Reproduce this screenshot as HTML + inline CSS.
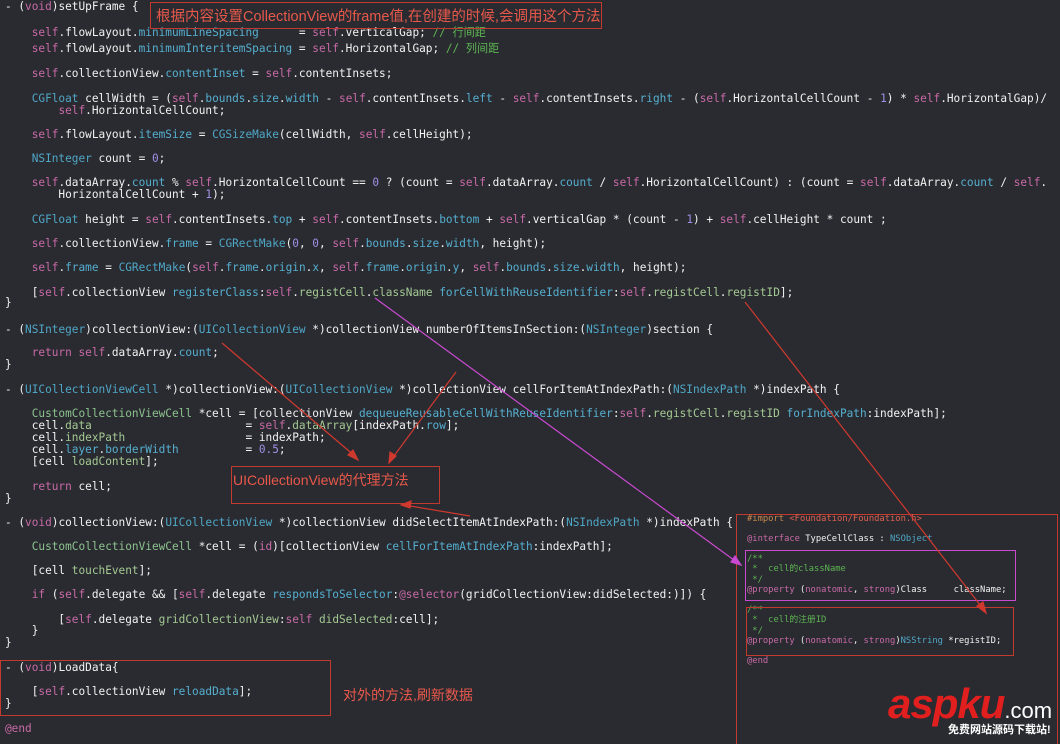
<!DOCTYPE html>
<html><head><meta charset="utf-8">
<style>
html,body{margin:0;padding:0;width:1060px;height:744px;overflow:hidden;}
body{background:#2a2b31;position:relative;font-family:"DejaVu Sans Mono","Noto Sans CJK SC",monospace;color:#f2f2f2;}
.l{position:absolute;left:5px;font-size:11.1px;line-height:13px;white-space:pre;}
.k{color:#c86aa6}.t{color:#4fa7c6}.p{color:#55afcf}.c{color:#8cc28e}.m{color:#5db552}.n{color:#a18fe6}.g{color:#a4c993}
.box{position:absolute;border:1px solid #c23a2e;}
.note{position:absolute;font-family:"Liberation Sans","Noto Sans CJK SC",sans-serif;color:#e8584a;font-size:14px;white-space:nowrap;}
.r{position:absolute;left:747px;font-size:8.8px;line-height:11px;white-space:pre;}
</style></head><body>
<div class="l" style="top:0px">- (<span class="k">void</span>)setUpFrame {</div>
<div class="l" style="top:26px">    <span class="k">self</span>.flowLayout.<span class="p">minimumLineSpacing</span>      = <span class="k">self</span>.verticalGap; <span class="m">// 行间距</span></div>
<div class="l" style="top:42px">    <span class="k">self</span>.flowLayout.<span class="p">minimumInteritemSpacing</span> = <span class="k">self</span>.HorizontalGap; <span class="m">// 列间距</span></div>
<div class="l" style="top:67px">    <span class="k">self</span>.collectionView.<span class="p">contentInset</span> = <span class="k">self</span>.contentInsets;</div>
<div class="l" style="top:92px">    <span class="t">CGFloat</span> cellWidth = (<span class="k">self</span>.<span class="p">bounds</span>.<span class="p">size</span>.<span class="p">width</span> - <span class="k">self</span>.contentInsets.<span class="p">left</span> - <span class="k">self</span>.contentInsets.<span class="p">right</span> - (<span class="k">self</span>.HorizontalCellCount - <span class="n">1</span>) * <span class="k">self</span>.HorizontalGap)/</div>
<div class="l" style="top:104px">        <span class="k">self</span>.HorizontalCellCount;</div>
<div class="l" style="top:128px">    <span class="k">self</span>.flowLayout.<span class="p">itemSize</span> = <span class="t">CGSizeMake</span>(cellWidth, <span class="k">self</span>.cellHeight);</div>
<div class="l" style="top:152px">    <span class="t">NSInteger</span> count = <span class="n">0</span>;</div>
<div class="l" style="top:176px">    <span class="k">self</span>.dataArray.<span class="p">count</span> % <span class="k">self</span>.HorizontalCellCount == <span class="n">0</span> ? (count = <span class="k">self</span>.dataArray.<span class="p">count</span> / <span class="k">self</span>.HorizontalCellCount) : (count = <span class="k">self</span>.dataArray.<span class="p">count</span> / <span class="k">self</span>.</div>
<div class="l" style="top:188px">        HorizontalCellCount + <span class="n">1</span>);</div>
<div class="l" style="top:213px">    <span class="t">CGFloat</span> height = <span class="k">self</span>.contentInsets.<span class="p">top</span> + <span class="k">self</span>.contentInsets.<span class="p">bottom</span> + <span class="k">self</span>.verticalGap * (count - <span class="n">1</span>) + <span class="k">self</span>.cellHeight * count ;</div>
<div class="l" style="top:237px">    <span class="k">self</span>.collectionView.<span class="p">frame</span> = <span class="t">CGRectMake</span>(<span class="n">0</span>, <span class="n">0</span>, <span class="k">self</span>.<span class="p">bounds</span>.<span class="p">size</span>.<span class="p">width</span>, height);</div>
<div class="l" style="top:261px">    <span class="k">self</span>.<span class="p">frame</span> = <span class="t">CGRectMake</span>(<span class="k">self</span>.<span class="p">frame</span>.<span class="p">origin</span>.<span class="p">x</span>, <span class="k">self</span>.<span class="p">frame</span>.<span class="p">origin</span>.<span class="p">y</span>, <span class="k">self</span>.<span class="p">bounds</span>.<span class="p">size</span>.<span class="p">width</span>, height);</div>
<div class="l" style="top:286px">    [<span class="k">self</span>.collectionView <span class="p">registerClass</span>:<span class="k">self</span>.<span class="g">registCell</span>.<span class="g">className</span> <span class="p">forCellWithReuseIdentifier</span>:<span class="k">self</span>.<span class="g">registCell</span>.<span class="g">registID</span>];</div>
<div class="l" style="top:296px">}</div>
<div class="l" style="top:323px">- (<span class="t">NSInteger</span>)collectionView:(<span class="t">UICollectionView</span> *)collectionView numberOfItemsInSection:(<span class="t">NSInteger</span>)section {</div>
<div class="l" style="top:346px">    <span class="k">return</span> <span class="k">self</span>.dataArray.<span class="p">count</span>;</div>
<div class="l" style="top:358px">}</div>
<div class="l" style="top:383px">- (<span class="t">UICollectionViewCell</span> *)collectionView:(<span class="t">UICollectionView</span> *)collectionView cellForItemAtIndexPath:(<span class="t">NSIndexPath</span> *)indexPath {</div>
<div class="l" style="top:407px">    <span class="c">CustomCollectionViewCell</span> *cell = [collectionView <span class="p">dequeueReusableCellWithReuseIdentifier</span>:<span class="k">self</span>.<span class="g">registCell</span>.<span class="g">registID</span> <span class="p">forIndexPath</span>:indexPath];</div>
<div class="l" style="top:419px">    cell.<span class="g">data</span>                       = <span class="k">self</span>.<span class="g">dataArray</span>[indexPath.<span class="p">row</span>];</div>
<div class="l" style="top:431px">    cell.<span class="g">indexPath</span>                  = indexPath;</div>
<div class="l" style="top:443px">    cell.<span class="p">layer</span>.<span class="p">borderWidth</span>          = <span class="n">0.5</span>;</div>
<div class="l" style="top:455px">    [cell <span class="g">loadContent</span>];</div>
<div class="l" style="top:480px">    <span class="k">return</span> cell;</div>
<div class="l" style="top:492px">}</div>
<div class="l" style="top:516px">- (<span class="k">void</span>)collectionView:(<span class="t">UICollectionView</span> *)collectionView didSelectItemAtIndexPath:(<span class="t">NSIndexPath</span> *)indexPath {</div>
<div class="l" style="top:540px">    <span class="c">CustomCollectionViewCell</span> *cell = (<span class="k">id</span>)[collectionView <span class="p">cellForItemAtIndexPath</span>:indexPath];</div>
<div class="l" style="top:564px">    [cell <span class="g">touchEvent</span>];</div>
<div class="l" style="top:588px">    <span class="k">if</span> (<span class="k">self</span>.delegate &amp;&amp; [<span class="k">self</span>.delegate <span class="p">respondsToSelector</span>:<span class="k">@selector</span>(gridCollectionView:didSelected:)]) {</div>
<div class="l" style="top:613px">        [<span class="k">self</span>.delegate <span class="g">gridCollectionView</span>:<span class="k">self</span> <span class="g">didSelected</span>:cell];</div>
<div class="l" style="top:624px">    }</div>
<div class="l" style="top:636px">}</div>
<div class="l" style="top:661px">- (<span class="k">void</span>)LoadData{</div>
<div class="l" style="top:685px">    [<span class="k">self</span>.collectionView <span class="p">reloadData</span>];</div>
<div class="l" style="top:697px">}</div>
<div class="l" style="top:722px"><span class="k">@end</span></div>

<div class="box" style="left:150px;top:2px;width:450px;height:25px"></div>
<div class="note" style="left:156px;top:5px;font-size:14.5px">根据内容设置CollectionView的frame值,在创建的时候,会调用这个方法</div>
<div class="box" style="left:231px;top:466px;width:207px;height:36px"></div>
<div class="note" style="left:233px;top:470px">UICollectionView的代理方法</div>
<div class="box" style="left:0px;top:660px;width:329px;height:54px"></div>
<div class="note" style="left:343px;top:685px">对外的方法,刷新数据</div>

<div class="box" style="left:736px;top:514px;width:320px;height:232px"></div>
<div class="r" style="top:514px"><span style="color:#c8884a">#import</span> <span style="color:#e0604e">&lt;Foundation/Foundation.h&gt;</span></div>
<div class="r" style="top:534px"><span class="k">@interface</span> TypeCellClass : <span class="t">NSObject</span></div>
<div class="r" style="top:554px;line-height:10.4px"><span class="m">/**
 *  cell的className
 */</span>
<span class="k">@property</span> (<span class="k">nonatomic</span>, <span class="k">strong</span>)Class     className;</div>
<div class="r" style="top:605px;line-height:10.4px"><span class="m">/**
 *  cell的注册ID
 */</span>
<span class="k">@property</span> (<span class="k">nonatomic</span>, <span class="k">strong</span>)<span class="t">NSString</span> *registID;</div>
<div class="r" style="top:656px"><span class="k">@end</span></div>
<div style="position:absolute;left:745px;top:550px;width:269px;height:49px;border:1px solid #c94ad0"></div>
<div class="box" style="left:746px;top:607px;width:266px;height:47px"></div>

<svg style="position:absolute;left:0;top:0" width="1060" height="744">
<g stroke="#d0392e" stroke-width="1.2" fill="#d0392e">
<line x1="222" y1="343" x2="356" y2="457"/><polygon points="358,460 348,455 353,450"/>
<line x1="456" y1="372" x2="391" y2="460"/><polygon points="389,463 390,452 396,456"/>
<line x1="470" y1="516" x2="404" y2="505"/><polygon points="401,505 411,501 410,508"/>
<line x1="745" y1="302" x2="984" y2="610"/><polygon points="986,613 977,606 983,602"/>
</g>
<g stroke="#c94ad0" stroke-width="1.2" fill="#c94ad0">
<line x1="375" y1="298" x2="738" y2="563"/><polygon points="741,565 731,562 735,556"/>
</g>
</svg>
<div style="position:absolute;left:888px;top:682px;white-space:nowrap;font-family:'Liberation Sans',sans-serif;font-weight:bold;font-style:italic;font-size:42px;line-height:44px;color:#e21f1f;letter-spacing:-1px">aspku<span style="color:#fff;font-weight:normal;font-style:normal;font-size:22px;letter-spacing:0">.com</span></div>
<div style="position:absolute;left:948px;top:724px;white-space:nowrap;font-family:'Liberation Sans','Noto Sans CJK SC',sans-serif;font-size:11px;line-height:13px;color:#fff;font-weight:bold">免费网站源码下载站!</div>
</body></html>
